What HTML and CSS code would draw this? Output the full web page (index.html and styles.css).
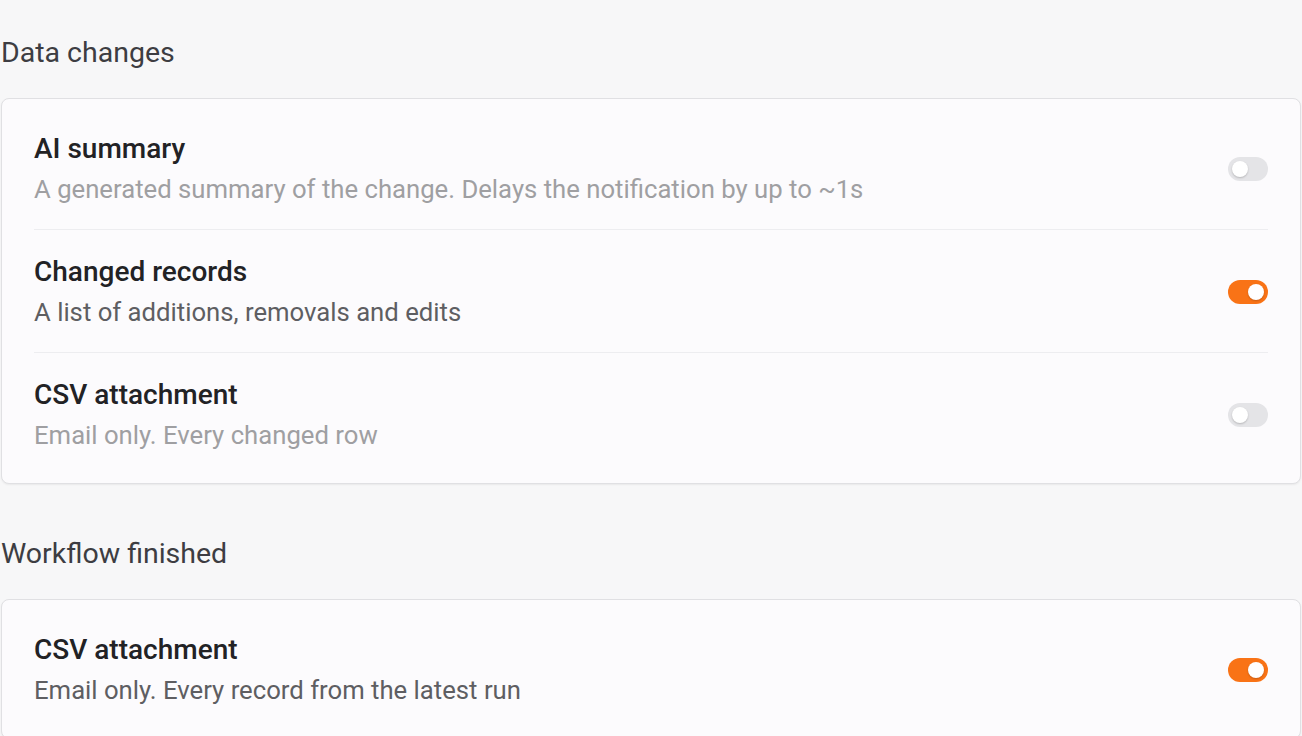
FILE: index.html
```html
<!DOCTYPE html>
<html>
<head>
<meta charset="utf-8">
<link rel="stylesheet" href="styles.css">
</head>
<body>
<main class="page">
  <section class="section">
    <h2 class="section-title">Data changes</h2>
    <div class="card">
      <div class="row">
        <div class="text">
          <div class="title">AI summary</div>
          <div class="desc muted">A generated summary of the change. Delays the notification by up to ~1s</div>
        </div>
        <span class="toggle"><span class="knob"></span></span>
      </div>
      <div class="row">
        <div class="text">
          <div class="title">Changed records</div>
          <div class="desc">A list of additions, removals and edits</div>
        </div>
        <span class="toggle on"><span class="knob"></span></span>
      </div>
      <div class="row">
        <div class="text">
          <div class="title">CSV attachment</div>
          <div class="desc muted">Email only. Every changed row</div>
        </div>
        <span class="toggle"><span class="knob"></span></span>
      </div>
    </div>
  </section>
  <section class="section">
    <h2 class="section-title">Workflow finished</h2>
    <div class="card">
      <div class="row">
        <div class="text">
          <div class="title">CSV attachment</div>
          <div class="desc">Email only. Every record from the latest run</div>
        </div>
        <span class="toggle on"><span class="knob"></span></span>
      </div>
    </div>
  </section>
</main>
</body>
</html>
```

FILE: styles.css
```css
* { box-sizing: border-box; }
html, body { margin: 0; padding: 0; }
body {
  background: #f7f7f8;
  font-family: Roboto, "Liberation Sans", sans-serif;
  width: 1302px;
  height: 736px;
  overflow: hidden;
}
.page {
  padding: 35px 1px 0 1px;
  display: flex;
  flex-direction: column;
  gap: 52px;
}
.section-title {
  margin: 0 0 27px 0;
  font-size: 28.5px;
  line-height: 36px;
  font-weight: 400;
  color: #3d3d42;
}
.card {
  background: #fcfbfd;
  border: 1px solid #e0e0e3;
  border-radius: 8px;
  box-shadow: 0 1px 2px rgba(0,0,0,0.06);
  padding: 8px 32px;
}
.row {
  display: flex;
  align-items: center;
  justify-content: space-between;
  padding: 22px 0 20px;
  border-bottom: 1px solid #ededf0;
}
.row:last-child { border-bottom: none; }
.title {
  font-size: 28px;
  line-height: 40px;
  font-weight: 500;
  color: #222225;
}
.desc {
  font-size: 25.7px;
  line-height: 40px;
  color: #5e5e62;
}
.desc.muted { color: #9f9fa2; }
.toggle {
  width: 40px;
  height: 24px;
  border-radius: 12px;
  background: #e4e4e7;
  display: flex;
  align-items: center;
  padding: 0 4px;
  flex-shrink: 0;
}
.knob {
  width: 16px;
  height: 16px;
  border-radius: 50%;
  background: #fff;
  box-shadow: 0 1px 2px rgba(0,0,0,0.2);
}
.toggle.on {
  background: #f97316;
  justify-content: flex-end;
}
```
